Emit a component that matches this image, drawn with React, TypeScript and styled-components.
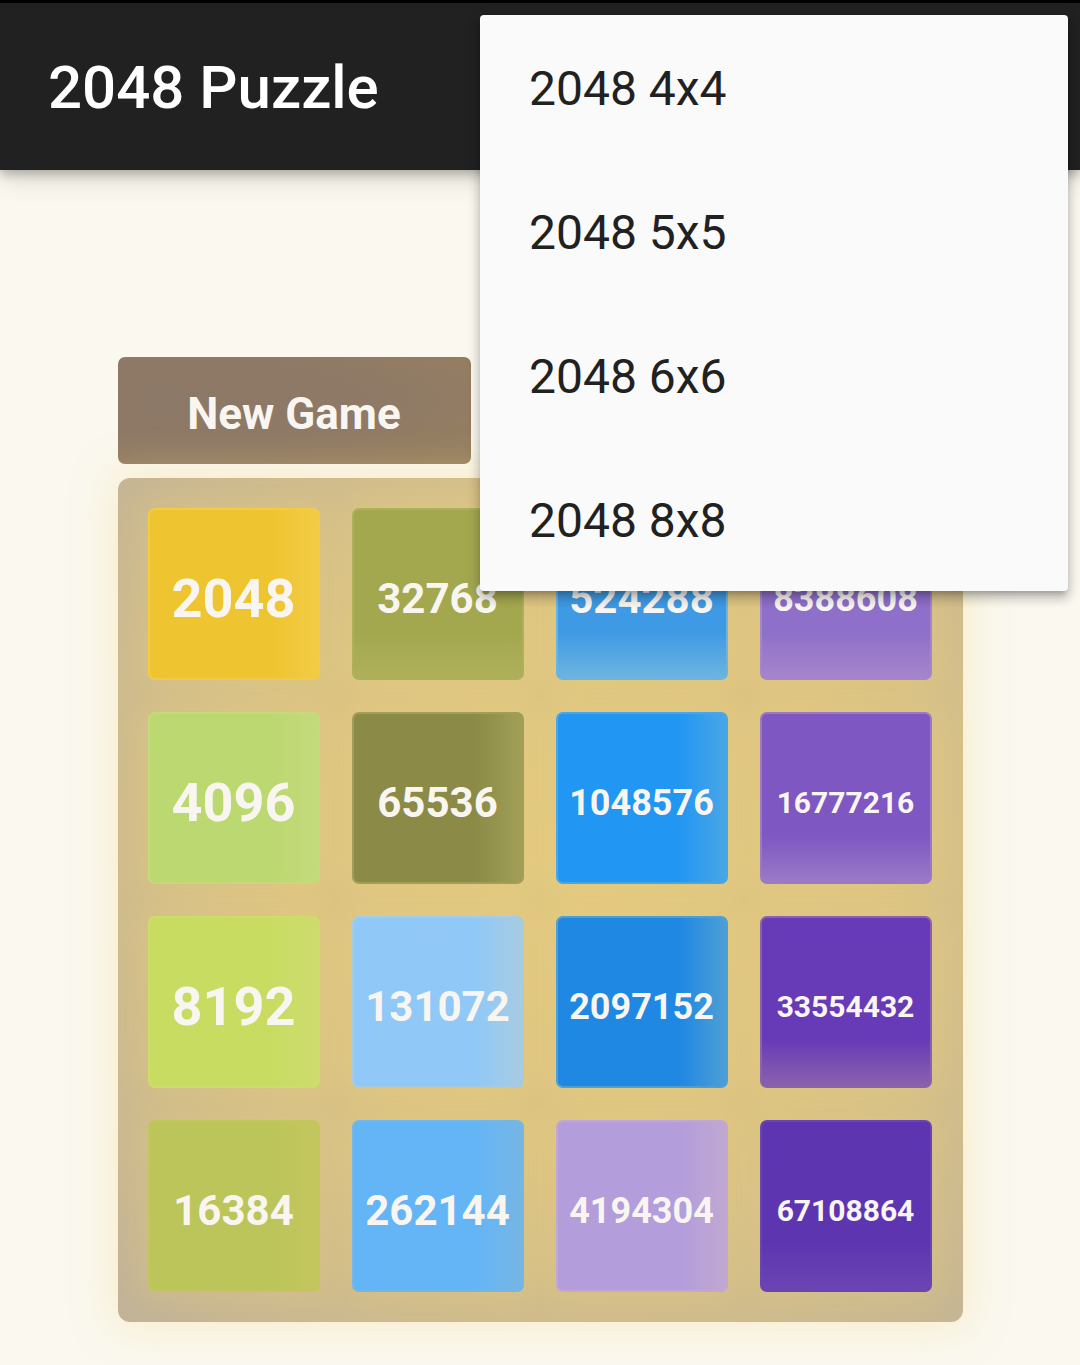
import React from 'react';
import styled, { createGlobalStyle } from 'styled-components';

const GlobalStyle = createGlobalStyle`
  html, body {
    margin: 0;
    padding: 0;
    background: #faf8ef;
    font-family: Roboto, "Liberation Sans", Arial, sans-serif;
  }
  * {
    box-sizing: border-box;
  }
`;

// side: where the tile's soft highlight sits (right edge or bottom edge)
type TileStyle = { bg: string; edge: string; size: number; side: 'right' | 'bottom' };

const tiles: { value: number; look: TileStyle }[] = [
  { value: 2048, look: { bg: '#efc431', edge: '#f2cc45', size: 54, side: 'right' } },
  { value: 32768, look: { bg: '#a3a84f', edge: '#aeb05a', size: 42, side: 'bottom' } },
  { value: 524288, look: { bg: '#3e9ae4', edge: '#6cb4e0', size: 42, side: 'bottom' } },
  { value: 8388608, look: { bg: '#8e6fc9', edge: '#a585cc', size: 36, side: 'bottom' } },
  { value: 4096, look: { bg: '#bcd870', edge: '#c4da7c', size: 54, side: 'right' } },
  { value: 65536, look: { bg: '#8b8b47', edge: '#a19f57', size: 42, side: 'right' } },
  { value: 1048576, look: { bg: '#2196f3', edge: '#4aa6e6', size: 36, side: 'right' } },
  { value: 16777216, look: { bg: '#7e57c2', edge: '#9a7ac6', size: 30, side: 'bottom' } },
  { value: 8192, look: { bg: '#c8dc62', edge: '#cedc6e', size: 54, side: 'right' } },
  { value: 131072, look: { bg: '#90c9f7', edge: '#a7cbe2', size: 42, side: 'right' } },
  { value: 2097152, look: { bg: '#1f88e3', edge: '#4d9fd6', size: 36, side: 'right' } },
  { value: 33554432, look: { bg: '#673ab7', edge: '#8a62ad', size: 30, side: 'bottom' } },
  { value: 16384, look: { bg: '#bcc55a', edge: '#c3c65e', size: 42, side: 'right' } },
  { value: 262144, look: { bg: '#64b5f6', edge: '#76b6e4', size: 42, side: 'right' } },
  { value: 4194304, look: { bg: '#b39ddb', edge: '#c0a8d2', size: 36, side: 'right' } },
  { value: 67108864, look: { bg: '#5e35b1', edge: '#6a45b2', size: 30, side: 'bottom' } },
];

const modes = ['2048 4x4', '2048 5x5', '2048 6x6', '2048 8x8'];

const Screen = styled.div`
  position: relative;
  width: 1080px;
  height: 1365px;
  overflow: hidden;
  background: #faf8ef;
`;

const AppBar = styled.header`
  height: 170px;
  background: #212121;
  border-top: 3px solid #000;
  display: flex;
  align-items: center;
  padding: 2px 0 0 48px;
  box-shadow: 0 4px 10px rgba(0, 0, 0, 0.25), 0 10px 24px rgba(0, 0, 0, 0.12);
  position: relative;
  z-index: 1;
`;

const Title = styled.h1`
  margin: 0;
  color: #fff;
  font-size: 60px;
  font-weight: 500;
`;

const Main = styled.main`
  display: flex;
  flex-direction: column;
  align-items: flex-start;
  width: 845px;
  margin: 187px auto 0;
  gap: 14px;
`;

const NewGameButton = styled.button`
  width: 353px;
  height: 107px;
  padding: 6px 0 0;
  border: none;
  border-radius: 7px;
  background: radial-gradient(ellipse at 20% 40%, #8c7866 0%, #8f7a66 50%, #97805f 100%);
  color: #f9f6f2;
  font-family: Roboto, "Liberation Sans", Arial, sans-serif;
  font-size: 44px;
  font-weight: 700;
  cursor: pointer;
`;

const Board = styled.div`
  width: 845px;
  height: 844px;
  padding: 30px;
  border-radius: 12px;
  background: radial-gradient(ellipse at 55% 45%, #e2c983 0%, #dcc486 45%, #c9b892 85%, #c1b29a 100%);
  box-shadow: 0 0 40px 6px rgba(245, 220, 140, 0.35);
  display: grid;
  grid-template-columns: repeat(4, 172px);
  grid-template-rows: repeat(4, 172px);
  gap: 32px;
`;

const Tile = styled.div<{ $bg: string; $edge: string; $size: number; $side: 'right' | 'bottom' }>`
  border-radius: 7px;
  background: linear-gradient(
    ${(p) => (p.$side === 'right' ? 'to right' : 'to bottom')},
    ${(p) => p.$bg} 72%,
    ${(p) => p.$edge} 100%
  );
  border: 2px solid ${(p) => p.$edge};
  box-shadow: 0 0 30px 8px rgba(243, 215, 116, 0.22);
  display: flex;
  align-items: center;
  justify-content: center;
  padding-top: 9px;
  color: #f9f6f2;
  font-size: ${(p) => p.$size}px;
  font-weight: 700;
`;

const Menu = styled.ul`
  position: absolute;
  top: 15px;
  left: 480px;
  width: 588px;
  margin: 0;
  padding: 0;
  list-style: none;
  background: #fafafa;
  border-radius: 4px;
  box-shadow: 0 5px 5px -3px rgba(0, 0, 0, 0.2), 0 8px 10px 1px rgba(0, 0, 0, 0.14),
    0 3px 14px 2px rgba(0, 0, 0, 0.12);
  z-index: 2;
`;

const MenuItem = styled.li`
  height: 144px;
  display: flex;
  align-items: center;
  padding: 2px 0 0 49px;
  font-size: 48px;
  color: #212121;
`;

export default function App() {
  return (
    <Screen>
      <GlobalStyle />
      <AppBar>
        <Title>2048 Puzzle</Title>
      </AppBar>
      <Main>
        <NewGameButton>New Game</NewGameButton>
        <Board>
          {tiles.map((t) => (
            <Tile
              key={t.value}
              $bg={t.look.bg}
              $edge={t.look.edge}
              $size={t.look.size}
              $side={t.look.side}
            >
              {t.value}
            </Tile>
          ))}
        </Board>
      </Main>
      <Menu>
        {modes.map((m) => (
          <MenuItem key={m}>{m}</MenuItem>
        ))}
      </Menu>
    </Screen>
  );
}
